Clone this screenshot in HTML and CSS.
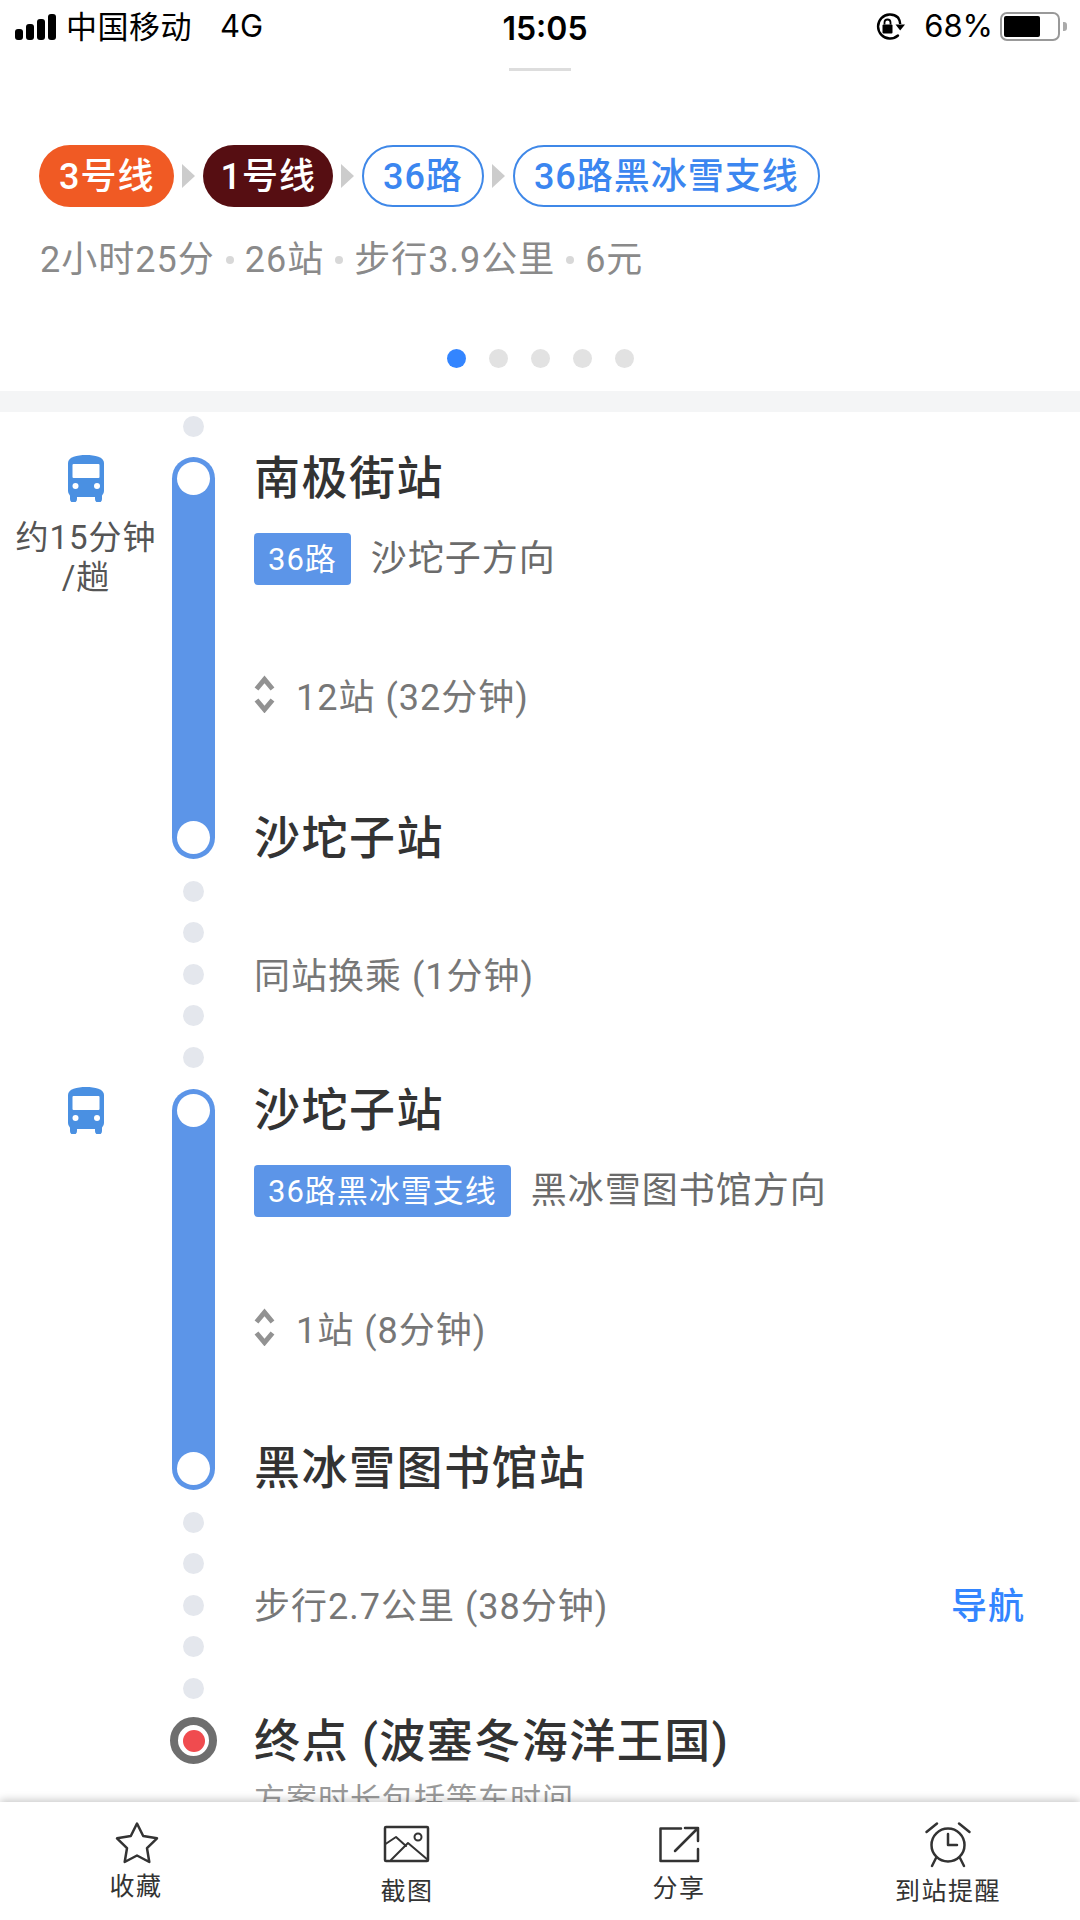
FILE: index.html
```html
<!DOCTYPE html>
<html lang="zh-CN">
<head>
    <meta charset="UTF-8">
    <meta name="viewport" content="width=device-width, initial-scale=1.0">
    <title>公交方案详情</title>
    <link rel="stylesheet" href="styles.css">
</head>
<body>
    <div class="page">
        <div class="statusBar">
            <div class="statusLeft">
                <div class="signal"><i></i><i></i><i></i><i></i></div>
                <span class="carrier">中国移动</span>
                <span class="network">4G</span>
            </div>
            <div class="clock">15:05</div>
            <div class="statusRight">
                <svg class="lockIcon" width="32" height="27" viewBox="0 0 32 27" fill="none">
                    <path d="M24 4.500A12 12 0 1 0 24 22.500" stroke="#000" stroke-width="2.400" stroke-linecap="round"/>
                    <path d="M24 4.500A12 12 0 0 1 26.200 11" stroke="#000" stroke-width="2.400"/>
                    <path d="M21.500 11.500h9.500l-4.800 6z" fill="#000"/>
                    <rect x="8.500" y="11.500" width="10" height="9" rx="1" fill="#000"/>
                    <path d="M10.500 11.500V9.500a3 3 0 0 1 6 0v2" stroke="#000" stroke-width="1.800"/>
                </svg>
                <span class="percent">68%</span>
                <div class="battery"><div class="batteryFill"></div></div>
                <div class="batteryCap"></div>
            </div>
        </div>

        <div class="header">
            <div class="handle"></div>
            <div class="lineRow">
                <span class="pill pillOrange">3号线</span>
                <span class="arrow"></span>
                <span class="pill pillDark">1号线</span>
                <span class="arrow"></span>
                <span class="pill pillOutline">36路</span>
                <span class="arrow"></span>
                <span class="pill pillOutline">36路黑冰雪支线</span>
            </div>
            <div class="summary">
                <span>2小时25分</span><i></i><span>26站</span><i></i><span>步行3.9公里</span><i></i><span>6元</span>
            </div>
            <div class="pager">
                <span class="active"></span><span></span><span></span><span></span><span></span>
            </div>
        </div>

        <div class="route">
            <div class="segment startDots">
                <div></div>
                <div class="dots"><span></span></div>
                <div></div>
            </div>

            <div class="segment">
                <div class="sideInfo">
                    <svg class="busIcon" width="36" height="47" viewBox="0 0 36 47">
                        <path d="M2 40h7v4a3 3 0 0 1-7 0zM27 40h7v4a3 3 0 0 1-7 0z" fill="#4a90e2"/>
                        <path d="M0 8C0 2 9 0 18 0s18 2 18 8v28a6 6 0 0 1-6 6H6a6 6 0 0 1-6-6z" fill="#4a90e2"/>
                        <rect x="4.500" y="9" width="27" height="14" rx="1" fill="#fff"/>
                        <circle cx="7.500" cy="31" r="3" fill="#fff"/>
                        <circle cx="29" cy="31" r="3" fill="#fff"/>
                    </svg>
                    <p>约15分钟<br>/趟</p>
                </div>
                <div class="rail"><span></span><span></span></div>
                <div class="rideBody">
                    <h2 class="station">南极街站</h2>
                    <div class="lineInfo">
                        <span class="tag">36路</span>
                        <span class="direction">沙坨子方向</span>
                    </div>
                    <div class="stops">
                        <svg width="21" height="38" viewBox="0 0 21 38" fill="none" stroke="#929292" stroke-width="5">
                            <path d="M2.500 14L10.500 4.500l8 9.500M2.500 25l8 9.500 8-9.500"/>
                        </svg>
                        <span>12站 (32分钟)</span>
                    </div>
                    <h2 class="station">沙坨子站</h2>
                </div>
            </div>

            <div class="segment linkSegment">
                <div></div>
                <div class="dots"><span></span><span></span><span></span><span></span><span></span></div>
                <div class="linkText">同站换乘 (1分钟)</div>
            </div>

            <div class="segment">
                <div class="sideInfo">
                    <svg class="busIcon" width="36" height="47" viewBox="0 0 36 47">
                        <path d="M2 40h7v4a3 3 0 0 1-7 0zM27 40h7v4a3 3 0 0 1-7 0z" fill="#4a90e2"/>
                        <path d="M0 8C0 2 9 0 18 0s18 2 18 8v28a6 6 0 0 1-6 6H6a6 6 0 0 1-6-6z" fill="#4a90e2"/>
                        <rect x="4.500" y="9" width="27" height="14" rx="1" fill="#fff"/>
                        <circle cx="7.500" cy="31" r="3" fill="#fff"/>
                        <circle cx="29" cy="31" r="3" fill="#fff"/>
                    </svg>
                </div>
                <div class="rail"><span></span><span></span></div>
                <div class="rideBody second">
                    <h2 class="station">沙坨子站</h2>
                    <div class="lineInfo">
                        <span class="tag">36路黑冰雪支线</span>
                        <span class="direction">黑冰雪图书馆方向</span>
                    </div>
                    <div class="stops">
                        <svg width="21" height="38" viewBox="0 0 21 38" fill="none" stroke="#929292" stroke-width="5">
                            <path d="M2.500 14L10.500 4.500l8 9.500M2.500 25l8 9.500 8-9.500"/>
                        </svg>
                        <span>1站 (8分钟)</span>
                    </div>
                    <h2 class="station">黑冰雪图书馆站</h2>
                </div>
            </div>

            <div class="segment linkSegment walkSegment">
                <div></div>
                <div class="dots"><span></span><span></span><span></span><span></span><span></span></div>
                <div class="linkText">
                    <span>步行2.7公里 (38分钟)</span>
                    <a class="navLink">导航</a>
                </div>
            </div>

            <div class="segment">
                <div></div>
                <div class="endCol"><div class="endMark"><span></span></div></div>
                <div class="endBody">
                    <h2 class="station">终点 (波塞冬海洋王国)</h2>
                    <p class="note">方案时长包括等车时间</p>
                </div>
            </div>
        </div>

        <div class="toolbar">
            <div class="tool">
                <svg width="48" height="48" viewBox="0 0 48 48" fill="none" stroke="#333" stroke-width="2.500" stroke-linejoin="round" stroke-linecap="round">
                    <path d="M25 3.500L31.200 16 45 18.300 35 28.200 37.300 42 25 35.500 12.700 42 15 28.200 5 18.300 18.800 16z"/>
                </svg>
                <span class="toolLabel labelHigh">收藏</span>
            </div>
            <div class="tool">
                <svg width="48" height="48" viewBox="0 0 48 48" fill="none" stroke="#333" stroke-width="2.500" stroke-linejoin="round" stroke-linecap="round">
                    <rect x="2" y="7" width="43" height="34" rx="1"/>
                    <circle cx="35" cy="17" r="3.500" stroke-width="2"/>
                    <path d="M2.500 24L13 17l10 9M8 40l17-17 20 17" stroke-width="2"/>
                </svg>
                <span class="toolLabel">截图</span>
            </div>
            <div class="tool">
                <svg width="48" height="48" viewBox="0 0 48 48" fill="none" stroke="#333" stroke-width="2.500" stroke-linecap="round" stroke-linejoin="round">
                    <path d="M26 8.500H5.500V41H43V29"/>
                    <path d="M20 31L43 8M30 8h13v13" stroke-width="2.500"/>
                </svg>
                <span class="toolLabel labelMid">分享</span>
            </div>
            <div class="tool">
                <svg width="48" height="48" viewBox="0 0 48 48" fill="none" stroke="#333" stroke-width="2.500" stroke-linecap="round" stroke-linejoin="round">
                    <circle cx="24" cy="25" r="16.500"/>
                    <path d="M24 14v11h9M2.500 12L13 3.500M35 3.500L45.500 12M12 38l-4 8M36 38l4 8"/>
                </svg>
                <span class="toolLabel">到站提醒</span>
            </div>
        </div>
    </div>
</body>
</html>
```

FILE: styles.css
```css
* {
    box-sizing: border-box;
}
html, body {
    margin: 0;
    padding: 0;
    background-color: #fff;
}
body {
    font-family: Roboto, "Noto Sans CJK SC", sans-serif;
}
h2, p {
    margin: 0;
}
.page {
    display: flex;
    flex-direction: column;
    width: 1080px;
    height: 1920px;
    overflow: hidden;
}

/* status bar */
.statusBar {
    display: grid;
    grid-template-columns: 1fr 200px 1fr;
    align-items: center;
    height: 53px;
    font-family: Inter, "Noto Sans CJK SC", sans-serif;
    font-size: 31px;
    color: #000;
}
.statusLeft {
    display: flex;
    align-items: center;
    padding-left: 15px;
}
.signal {
    display: flex;
    align-items: flex-end;
    gap: 3px;
    height: 26px;
}
.signal i {
    display: block;
    width: 8px;
    border-radius: 3px;
    background-color: #000;
}
.signal i:nth-child(1) { height: 11px; }
.signal i:nth-child(2) { height: 16px; }
.signal i:nth-child(3) { height: 21px; }
.signal i:nth-child(4) { height: 26px; }
.carrier {
    margin: 0 0 4px 10px;
    letter-spacing: 0.5px;
}
.network {
    margin: 0 0 2px 28px;
}
.clock {
    margin-top: 3px;
    padding-left: 10px;
    text-align: center;
    font-size: 32px;
    font-weight: 600;
}
.statusRight {
    display: flex;
    align-items: center;
    justify-content: flex-end;
    padding-right: 13px;
}
.percent {
    margin: 0 0 2px 18px;
}
.battery {
    width: 60px;
    height: 29px;
    margin-left: 7px;
    padding: 2px;
    border: 2px solid #999;
    border-radius: 7px;
}
.batteryFill {
    width: 36px;
    height: 100%;
    border-radius: 2px;
    background-color: #000;
}
.batteryCap {
    width: 4px;
    height: 9px;
    margin-left: 3px;
    border-radius: 0 3px 3px 0;
    background-color: #aaa;
}

/* route summary */
.header {
    display: flex;
    flex-direction: column;
    height: 338px;
    padding-top: 15px;
}
.handle {
    align-self: center;
    width: 62px;
    height: 3px;
    background-color: #ddd;
}
.lineRow {
    display: flex;
    align-items: center;
    gap: 8px;
    margin-top: 74px;
    padding-left: 39px;
}
.pill {
    height: 62px;
    padding: 0 19px;
    border-radius: 31px;
    font-size: 36px;
    font-weight: 500;
    letter-spacing: 1px;
    line-height: 64px;
    white-space: nowrap;
}
.pillOrange {
    padding: 0 20px;
    background-color: #f05a24;
    color: #fff;
}
.pillDark {
    padding: 0 17px;
    background-color: #560e12;
    color: #fff;
}
.pillOutline {
    border: 2px solid #3f88e8;
    line-height: 60px;
    color: #3b86f0;
}
.arrow {
    width: 0;
    height: 0;
    border-top: 12px solid transparent;
    border-bottom: 12px solid transparent;
    border-left: 13px solid #ccc;
}
.summary {
    display: flex;
    align-items: center;
    gap: 11px;
    margin-top: 26px;
    padding-left: 40px;
    font-size: 36px;
    letter-spacing: 1px;
    line-height: 54px;
    color: #8a8a8a;
}
.summary i {
    width: 8px;
    height: 8px;
    border-radius: 50%;
    background-color: #d8d8d8;
}
.pager {
    display: flex;
    justify-content: center;
    gap: 23px;
    margin-top: 62px;
}
.pager span {
    width: 19px;
    height: 19px;
    border-radius: 50%;
    background-color: #e2e2e2;
}
.pager .active {
    background-color: #3385ff;
}

/* timeline */
.route {
    flex: 1;
    min-height: 0;
    overflow: hidden;
    border-top: 21px solid #f4f5f6;
}
.segment {
    display: grid;
    grid-template-columns: 172px 43px 1fr;
}
.startDots {
    height: 45px;
}
.startDots .dots {
    justify-content: flex-start;
    padding-top: 4px;
}
.dots {
    display: flex;
    flex-direction: column;
    align-items: center;
    justify-content: center;
    gap: 20.5px;
}
.dots span {
    width: 21px;
    height: 21px;
    border-radius: 50%;
    background-color: #e4e7ed;
}
.sideInfo {
    display: flex;
    flex-direction: column;
    align-items: center;
    color: #555;
    font-size: 33px;
    letter-spacing: 1px;
    line-height: 40px;
    text-align: center;
}
.busIcon {
    margin-top: -2px;
}
.sideInfo p {
    margin-top: 16px;
    white-space: nowrap;
}
.rail {
    display: flex;
    flex-direction: column;
    align-items: center;
    justify-content: space-between;
    padding: 5px 0;
    border-radius: 22px;
    background-color: #5c95e8;
}
.rail span {
    width: 33px;
    height: 33px;
    border-radius: 50%;
    background-color: #fff;
}
.rideBody {
    margin: -7px 0;
    padding-left: 39px;
}
.rideBody.second {
    margin: -7px 0 -6px;
}
.station {
    font-size: 46px;
    font-weight: 500;
    letter-spacing: 1.5px;
    line-height: 56px;
    color: #333;
}
.lineInfo {
    display: flex;
    align-items: center;
    height: 52px;
    margin-top: 27px;
}
.tag {
    height: 52px;
    padding: 0 14px;
    border-radius: 4px;
    background-color: #5c95e8;
    color: #fff;
    font-size: 31px;
    letter-spacing: 1px;
    line-height: 53px;
}
.direction {
    margin-left: 20px;
    font-size: 36px;
    letter-spacing: 1px;
    line-height: 44px;
    color: #6b6b6b;
}
.stops {
    display: flex;
    align-items: center;
    gap: 21px;
    height: 50px;
    margin: 84px 0 91px;
    font-size: 36px;
    letter-spacing: 1px;
    color: #777;
}
.second .stops {
    margin: 85px 0 88px;
}
.linkSegment {
    height: 230px;
}
.walkSegment {
    height: 227px;
}
.walkSegment .dots {
    padding-top: 3px;
}
.linkText {
    display: flex;
    align-items: center;
    justify-content: space-between;
    padding: 0 55px 2px 39px;
    font-size: 36px;
    letter-spacing: 1px;
    color: #777;
}
.navLink {
    font-weight: 500;
    color: #3385ff;
}
.endCol {
    display: flex;
    justify-content: center;
}
.endMark {
    display: flex;
    flex: none;
    align-items: center;
    justify-content: center;
    width: 47px;
    height: 47px;
    border: 8px solid #6e6e6e;
    border-radius: 50%;
    background-color: #fff;
}
.endMark span {
    width: 22px;
    height: 22px;
    border-radius: 50%;
    background-color: #f04b4f;
}
.endBody {
    margin-top: -4px;
    padding-left: 39px;
}
.note {
    margin-top: 11px;
    font-size: 31px;
    letter-spacing: 1px;
    line-height: 40px;
    color: #999;
}

/* bottom toolbar */
.toolbar {
    position: relative;
    display: grid;
    grid-template-columns: 272px 270px 274px 264px;
    flex: none;
    height: 118px;
    padding-top: 18px;
    background-color: #fff;
    box-shadow: 0 -2px 8px rgba(0, 0, 0, 0.22);
}
.tool {
    display: flex;
    flex-direction: column;
    align-items: center;
}
.toolLabel {
    margin-top: 8px;
    font-size: 25px;
    letter-spacing: 1.5px;
    line-height: 32px;
    color: #333;
    white-space: nowrap;
}
.labelHigh {
    margin-top: 3px;
}
.labelMid {
    margin-top: 5px;
}
```
